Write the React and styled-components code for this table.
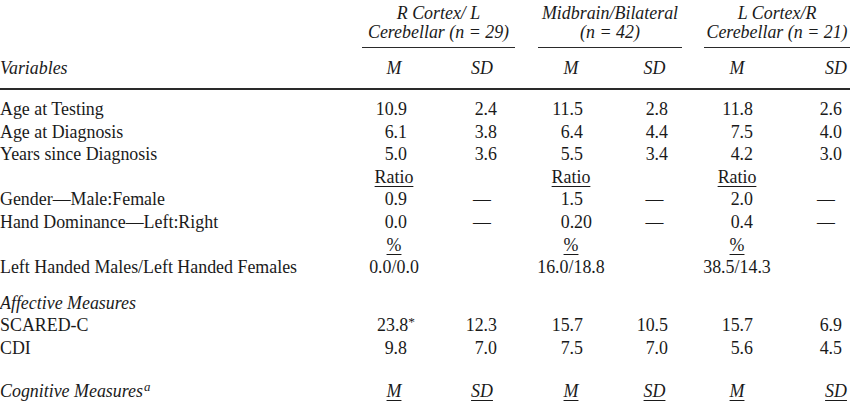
import React from 'react';
import styled, { createGlobalStyle } from 'styled-components';

const COLS = [
  { w: 362 },
  { w: 64, pr: 19 },
  { w: 89, pr: 18, headPl: 23, dashPl: 23 },
  { w: 112, pr: 44 },
  { w: 55, pr: 14, headPl: 0, dashPl: 0 },
  { w: 110, pr: 39 },
  { w: 58, pr: 8, headPl: 30, dashPl: 10 },
];

const GROUPS = [
  { lines: ['R Cortex/ L', 'Cerebellar (n = 29)'], gap: 0 },
  { lines: ['Midbrain/Bilateral', '(n = 42)'], gap: 23 },
  { lines: ['L Cortex/R', 'Cerebellar (n = 21)'], gap: 22 },
];

const DASH = { kind: 'dash', v: '—' };
const U = (v) => ({ kind: 'center', v, under: true });
const C = (v) => ({ kind: 'center', v });

const ROWS = [
  { label: 'Age at Testing', cells: ['10.9', '2.4', '11.5', '2.8', '11.8', '2.6'] },
  { label: 'Age at Diagnosis', cells: ['6.1', '3.8', '6.4', '4.4', '7.5', '4.0'] },
  { label: 'Years since Diagnosis', cells: ['5.0', '3.6', '5.5', '3.4', '4.2', '3.0'] },
  { label: '', cells: [U('Ratio'), '', U('Ratio'), '', U('Ratio'), ''] },
  { label: 'Gender—Male:Female', cells: ['0.9', DASH, '1.5', DASH, '2.0', DASH] },
  { label: 'Hand Dominance—Left:Right', cells: ['0.0', DASH, { kind: 'num', v: '0.20', hang: 9 }, DASH, '0.4', DASH] },
  { label: '', cells: [U('%'), '', U('%'), '', U('%'), ''] },
  { label: 'Left Handed Males/Left Handed Females', cells: [C('0.0/0.0'), '', C('16.0/18.8'), '', C('38.5/14.3'), ''] },
  { spacer: 13 },
  { label: 'Affective Measures', italic: true, cells: [] },
  { label: 'SCARED-C', cells: [{ kind: 'num', v: '23.8', star: true }, '12.3', '15.7', '10.5', '15.7', '6.9'] },
  { label: 'CDI', cells: ['9.8', '7.0', '7.5', '7.0', '5.6', '4.5'] },
  { spacer: 20 },
  { label: 'Cognitive Measures', italic: true, sup: 'a', stats: true, cells: [] },
];

const GlobalStyle = createGlobalStyle`
  body {
    margin: 0;
    background: #fff;
  }
`;

const Table = styled.table`
  width: 850px;
  table-layout: fixed;
  border-collapse: separate;
  border-spacing: 0;
  font-family: "Liberation Serif", "Times New Roman", serif;
  font-size: 17.9px;
  color: #1a1a1a;
`;

const GroupTh = styled.th`
  padding: 4px 0 0 ${(p) => p.$gap}px;
  font-weight: normal;
  font-style: italic;
  vertical-align: bottom;
`;

const GroupTitle = styled.div`
  line-height: 19px;
  padding-bottom: 5px;
  text-align: center;
  border-bottom: 1px solid #2a2a2a;
`;

const HeadCell = styled.th`
  height: 40px;
  padding: 0 0 0 ${(p) => p.$pl || 0}px;
  font-weight: normal;
  font-style: italic;
  text-align: ${(p) => p.$align};
  vertical-align: middle;
  border-bottom: 2px solid #2a2a2a;
`;

const Spacer = styled.td`
  height: ${(p) => p.$h}px;
  padding: 0;
`;

const Label = styled.td`
  padding: 0;
  line-height: 22.6px;
  white-space: nowrap;
  font-style: ${(p) => (p.$italic ? 'italic' : 'normal')};
`;

const Cell = styled.td`
  padding: 0 ${(p) => p.$pr || 0}px 0 ${(p) => p.$pl || 0}px;
  line-height: 22.6px;
  white-space: nowrap;
  text-align: ${(p) => p.$align};
`;

const StatLabel = styled.td`
  padding: 0 0 0 ${(p) => p.$pl || 0}px;
  line-height: 22.6px;
  font-style: italic;
  text-align: center;
`;

const Under = styled.span`
  text-decoration: underline;
  text-decoration-thickness: 1px;
  text-underline-offset: 3px;
`;

const Hang = styled.span`
  margin-right: -${(p) => p.$w}px;
`;

const Star = styled.sup`
  font-size: 0.75em;
  vertical-align: 0.4em;
  line-height: 0;
  margin-right: -8px;
`;

const Super = styled.sup`
  font-size: 0.72em;
  vertical-align: 0.45em;
  line-height: 0;
  margin-left: 1px;
`;

const FirstPad = styled.td`
  height: 8px;
  padding: 0;
`;

function ValueCell({ cell, col }) {
  if (!cell) return <Cell $align="right" />;
  const c = typeof cell === 'string' ? { kind: 'num', v: cell } : cell;
  if (c.kind === 'center') {
    return (
      <Cell $align="center">{c.under ? <Under>{c.v}</Under> : c.v}</Cell>
    );
  }
  if (c.kind === 'dash') {
    return <Cell $align="center" $pl={col.dashPl}>{c.v}</Cell>;
  }
  return (
    <Cell $align="right" $pr={col.pr}>
      {c.hang ? <Hang $w={c.hang}>{c.v}</Hang> : c.v}
      {c.star && <Star>*</Star>}
    </Cell>
  );
}

const App = () => {
  const valueCols = COLS.slice(1);
  return (
    <>
      <GlobalStyle />
      <Table>
        <colgroup>
          {COLS.map((c, i) => (
            <col key={i} style={{ width: c.w }} />
          ))}
        </colgroup>
        <thead>
          <tr>
            <th />
            {GROUPS.map((g, i) => (
              <GroupTh key={i} colSpan={2} $gap={g.gap}>
                <GroupTitle>
                  {g.lines.map((l, j) => (
                    <div key={j}>{l}</div>
                  ))}
                </GroupTitle>
              </GroupTh>
            ))}
          </tr>
          <tr>
            <HeadCell $align="left">Variables</HeadCell>
            {valueCols.map((c, i) => (
              <HeadCell key={i} $align="center" $pl={c.headPl}>
                {i % 2 === 0 ? 'M' : 'SD'}
              </HeadCell>
            ))}
          </tr>
        </thead>
        <tbody>
          <tr>
            <FirstPad colSpan={7} />
          </tr>
          {ROWS.map((r, i) => {
            if (r.spacer) {
              return (
                <tr key={i}>
                  <Spacer colSpan={7} $h={r.spacer} />
                </tr>
              );
            }
            return (
              <tr key={i}>
                <Label $italic={r.italic}>
                  {r.label}
                  {r.sup && <Super>{r.sup}</Super>}
                </Label>
                {r.stats
                  ? valueCols.map((c, j) => (
                      <StatLabel key={j} $pl={c.headPl}>
                        <Under>{j % 2 === 0 ? 'M' : 'SD'}</Under>
                      </StatLabel>
                    ))
                  : valueCols.map((c, j) => (
                      <ValueCell key={j} cell={r.cells[j]} col={c} />
                    ))}
              </tr>
            );
          })}
        </tbody>
      </Table>
    </>
  );
};

export default App;
